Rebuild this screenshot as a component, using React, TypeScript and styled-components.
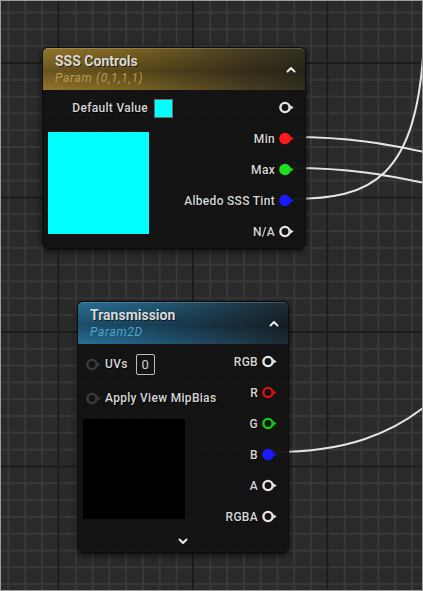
import styled, { createGlobalStyle } from "styled-components";

const GlobalStyle = createGlobalStyle`
  html, body {
    margin: 0;
    padding: 0;
    background: #262626;
  }
  * {
    box-sizing: border-box;
  }
`;

type PinKind = "hollow" | "filled" | "dim";

interface PinProps {
  color: string;
  kind: PinKind;
}

function Pin({ color, kind }: PinProps) {
  const ringColor = kind === "dim" ? "#3c3c3c" : color;
  return (
    <PinIcon width="15" height="13" viewBox="0 0 15 13">
      {kind === "filled" ? (
        <circle cx="6" cy="6.5" r="5.8" fill={color} />
      ) : (
        <circle cx="6" cy="6.5" r="4.6" fill="none" stroke={ringColor} strokeWidth="2.4" />
      )}
      <polygon points="11.4,4.2 14.6,6.5 11.4,8.8" fill={ringColor} />
    </PinIcon>
  );
}

function Chevron({ down }: { down?: boolean }) {
  return (
    <ChevronIcon width="10" height="7" viewBox="0 0 10 7">
      <polyline
        points={down ? "1.5,1.5 5,5 8.5,1.5" : "1.5,5.5 5,2 8.5,5.5"}
        fill="none"
        stroke="#e8e8e8"
        strokeWidth="2"
        strokeLinecap="round"
        strokeLinejoin="round"
      />
    </ChevronIcon>
  );
}

interface Output {
  label: string;
  color: string;
  kind: PinKind;
}

const sssOutputs: Output[] = [
  { label: "", color: "#e6e6e6", kind: "hollow" },
  { label: "Min", color: "#ff1a1a", kind: "filled" },
  { label: "Max", color: "#1de01d", kind: "filled" },
  { label: "Albedo SSS Tint", color: "#1a1aff", kind: "filled" },
  { label: "N/A", color: "#e6e6e6", kind: "hollow" },
];

const textureOutputs: Output[] = [
  { label: "RGB", color: "#e6e6e6", kind: "hollow" },
  { label: "R", color: "#e01010", kind: "hollow" },
  { label: "G", color: "#10d010", kind: "hollow" },
  { label: "B", color: "#1a1aff", kind: "filled" },
  { label: "A", color: "#e6e6e6", kind: "hollow" },
  { label: "RGBA", color: "#e6e6e6", kind: "hollow" },
];

function Outputs({ items }: { items: Output[] }) {
  return (
    <OutputColumn>
      {items.map((o, i) => (
        <OutputRow key={i}>
          {o.label && <PinLabel>{o.label}</PinLabel>}
          <Pin color={o.color} kind={o.kind} />
        </OutputRow>
      ))}
    </OutputColumn>
  );
}

export default function App() {
  return (
    <>
      <GlobalStyle />
      <Canvas>
        <Wires width="423" height="591" viewBox="0 0 423 591">
          <path d="M 292 137 C 350 137, 385 144, 425 152" />
          <path d="M 292 168 C 350 168, 385 175, 425 183" />
          <path d="M 292 199 C 370 199, 418 180, 424 40" />
          <path d="M 275 452 C 345 452, 392 434, 428 404" />
        </Wires>

        <Node $left={42} $top={47} $width={264}>
          <Header $variant="gold">
            <HeaderText>
              <Title>SSS Controls</Title>
              <Subtitle $variant="gold">Param (0,1,1,1)</Subtitle>
            </HeaderText>
            <Chevron />
          </Header>
          <Body>
            <SssInputs>
              <DefaultRow>
                <PinLabel>Default Value</PinLabel>
                <Swatch />
              </DefaultRow>
              <Preview $color="#00ffff" $width={101} $height={102} $gap={8} />
            </SssInputs>
            <Outputs items={sssOutputs} />
          </Body>
        </Node>

        <Node $left={77} $top={301} $width={212}>
          <Header $variant="blue">
            <HeaderText>
              <Title>Transmission</Title>
              <Subtitle $variant="blue">Param2D</Subtitle>
            </HeaderText>
            <Chevron />
          </Header>
          <Body>
            <TextureInputs>
              <InputRow>
                <Pin color="#3c3c3c" kind="dim" />
                <PinLabel>UVs</PinLabel>
                <IndexBox>0</IndexBox>
              </InputRow>
              <InputRow>
                <Pin color="#3c3c3c" kind="dim" />
                <PinLabel>Apply View MipBias</PinLabel>
              </InputRow>
              <Preview $color="#000000" $width={102} $height={100} $gap={4} />
            </TextureInputs>
            <Outputs items={textureOutputs} />
          </Body>
          <Footer>
            <Chevron down />
          </Footer>
        </Node>
      </Canvas>
    </>
  );
}

const Canvas = styled.div`
  position: relative;
  width: 423px;
  height: 591px;
  overflow: hidden;
  border: 1px solid #9c9c9c;
  background-color: #2a2a2a;
  background-image: linear-gradient(to right, #1b1b1b 2px, transparent 2px),
    linear-gradient(to bottom, #1b1b1b 2px, transparent 2px),
    linear-gradient(to right, #383838 2px, transparent 2px),
    linear-gradient(to bottom, #383838 2px, transparent 2px);
  background-size: 134.5px 134.5px, 134.5px 134.5px, 16.8125px 16.8125px,
    16.8125px 16.8125px;
  background-position: 56.5px 0, 0 61px, 6.5px 0, 0 10.5px;
  font-family: Roboto, "Liberation Sans", sans-serif;
`;

const Wires = styled.svg`
  position: absolute;
  left: -1px;
  top: -1px;
  pointer-events: none;

  path {
    fill: none;
    stroke: #e4e4e4;
    stroke-width: 2;
  }
`;

const Node = styled.div<{ $left: number; $top: number; $width: number }>`
  position: absolute;
  left: ${(p) => p.$left - 1}px;
  top: ${(p) => p.$top - 1}px;
  width: ${(p) => p.$width}px;
  display: flex;
  flex-direction: column;
  background: rgba(19, 19, 19, 0.96);
  border: 1px solid #0c0c0c;
  border-radius: 6px;
  box-shadow: 0 2px 6px rgba(0, 0, 0, 0.7);
`;

const Header = styled.div<{ $variant: "gold" | "blue" }>`
  display: flex;
  align-items: center;
  justify-content: space-between;
  height: 42px;
  padding: 0 9px 0 12px;
  border-radius: 5px 5px 0 0;
  box-shadow: inset 0 1px 0 rgba(255, 255, 255, 0.18);
  background: ${(p) =>
    p.$variant === "gold"
      ? `linear-gradient(to bottom, rgba(0,0,0,0) 0%, rgba(0,0,0,0.28) 55%, rgba(0,0,0,0) 100%),
         linear-gradient(to right, #93762a 0%, #7a6222 35%, #4a3f22 75%, #33301f 100%)`
      : `linear-gradient(to bottom, rgba(0,0,0,0) 0%, rgba(0,0,0,0.3) 55%, rgba(0,0,0,0) 100%),
         linear-gradient(to right, #2a6f97 0%, #225a7a 35%, #1f3d4f 75%, #1d2a32 100%)`};
`;

const HeaderText = styled.div`
  display: flex;
  flex-direction: column;
  gap: 1px;
`;

const Title = styled.div`
  font-size: 14px;
  font-weight: 700;
  color: #d8d8d8;
  line-height: 17px;
  text-shadow: 1px 1px 0 rgba(0, 0, 0, 0.6);
`;

const Subtitle = styled.div<{ $variant: "gold" | "blue" }>`
  font-size: 12px;
  font-style: italic;
  line-height: 15px;
  letter-spacing: 0.7px;
  color: ${(p) => (p.$variant === "gold" ? "#b89b52" : "#4ea6c8")};
`;

const ChevronIcon = styled.svg`
  display: block;
  flex: none;
`;

const Body = styled.div`
  display: flex;
  justify-content: space-between;
  padding: 2px 10px 1px 4px;
`;

const SssInputs = styled.div`
  display: flex;
  flex-direction: column;
  width: 126px;
`;

const TextureInputs = styled.div`
  display: flex;
  flex-direction: column;
  padding-top: 1px;
`;

const DefaultRow = styled.div`
  display: flex;
  align-items: center;
  justify-content: flex-end;
  gap: 6px;
  height: 32px;
`;

const Swatch = styled.div`
  width: 19px;
  height: 19px;
  background: #00ffff;
  border: 1px solid #6a6a6a;
`;

const InputRow = styled.div`
  display: flex;
  align-items: center;
  gap: 4px;
  height: 34px;
  padding-left: 4px;
`;

const IndexBox = styled.div`
  display: flex;
  align-items: center;
  justify-content: center;
  width: 19px;
  height: 21px;
  margin-left: 4px;
  border: 1.5px solid #bdbdbd;
  border-radius: 2px;
  font-size: 13px;
  color: #d0d0d0;
`;

const Preview = styled.div<{
  $color: string;
  $width: number;
  $height: number;
  $gap: number;
}>`
  width: ${(p) => p.$width}px;
  height: ${(p) => p.$height}px;
  margin-top: ${(p) => p.$gap}px;
  margin-left: 1px;
  background: ${(p) => p.$color};
`;

const OutputColumn = styled.div`
  display: flex;
  flex-direction: column;
`;

const OutputRow = styled.div`
  display: flex;
  align-items: center;
  justify-content: flex-end;
  gap: 4px;
  height: 31px;
  margin-right: 1px;
`;

const PinLabel = styled.span`
  font-size: 12px;
  font-weight: 500;
  letter-spacing: 0.3px;
  color: #d6d6d6;
  white-space: nowrap;
  text-shadow: 1px 1px 0 rgba(0, 0, 0, 0.9);
`;

const PinIcon = styled.svg`
  display: block;
  flex: none;
`;

const Footer = styled.div`
  display: flex;
  justify-content: center;
  align-items: center;
  height: 19px;
  padding-bottom: 3px;
`;
